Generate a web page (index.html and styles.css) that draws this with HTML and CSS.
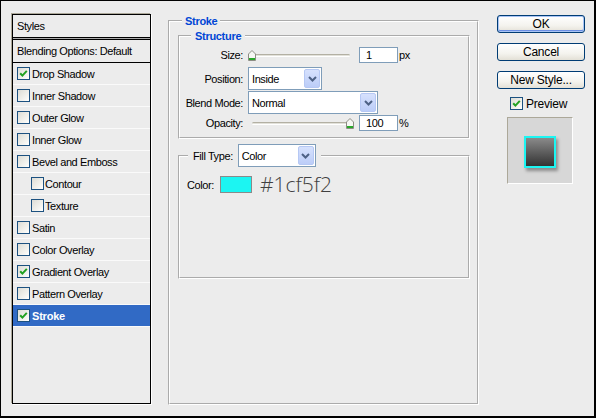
FILE: index.html
```html
<!DOCTYPE html>
<html>
<head>
<meta charset="utf-8">
<title>Layer Style</title>
<link rel="stylesheet" href="styles.css">
</head>
<body>
<div class="dialog">
  <div class="styles-panel">
    <div class="styles-head">Styles</div>
    <div class="blend-row">Blending Options: Default</div>
    <div class="style-row"><span class="cb"><svg viewBox="0 0 11 11" width="11" height="11"><path d="M2.2 5.2 L4.4 7.6 L8.8 2.9" /></svg></span><span>Drop Shadow</span></div>
    <div class="style-row"><span class="cb"></span><span>Inner Shadow</span></div>
    <div class="style-row"><span class="cb"></span><span>Outer Glow</span></div>
    <div class="style-row"><span class="cb"></span><span>Inner Glow</span></div>
    <div class="style-row"><span class="cb"></span><span>Bevel and Emboss</span></div>
    <div class="style-row sub"><span class="cb"></span><span>Contour</span></div>
    <div class="style-row sub"><span class="cb"></span><span>Texture</span></div>
    <div class="style-row"><span class="cb"></span><span>Satin</span></div>
    <div class="style-row"><span class="cb"></span><span>Color Overlay</span></div>
    <div class="style-row"><span class="cb"><svg viewBox="0 0 11 11" width="11" height="11"><path d="M2.2 5.2 L4.4 7.6 L8.8 2.9" /></svg></span><span>Gradient Overlay</span></div>
    <div class="style-row"><span class="cb"></span><span>Pattern Overlay</span></div>
    <div class="style-row selected"><span class="cb"><svg viewBox="0 0 11 11" width="11" height="11"><path d="M2.2 5.2 L4.4 7.6 L8.8 2.9" /></svg></span><span>Stroke</span></div>
  </div>

  <fieldset class="group stroke-group">
    <legend class="legend-blue stroke-legend">Stroke</legend>
    <fieldset class="group structure">
      <legend class="legend-blue structure-legend">Structure</legend>
      <div class="frow r-size">
        <span class="lbl">Size:</span>
        <div class="slider">
          <div class="track"></div>
          <svg class="thumb" style="left:0px" width="8" height="11" viewBox="0 0 8 11"><path d="M0.5 4 L4 0.5 L7.5 4 V10.5 H0.5 Z" fill="#f7f7f4" stroke="#8d8d84"/><rect x="1" y="8" width="6" height="2" fill="#2aa82a"/></svg>
        </div>
        <div class="num">1</div><span class="unit">px</span>
      </div>
      <div class="frow r-sel">
        <span class="lbl">Position:</span>
        <div class="select sel-pos">Inside<span class="drop"><svg width="9" height="6" viewBox="0 0 9 6"><path d="M1 1 L4.5 4.5 L8 1"/></svg></span></div>
      </div>
      <div class="frow r-sel">
        <span class="lbl">Blend Mode:</span>
        <div class="select sel-blend">Normal<span class="drop"><svg width="9" height="6" viewBox="0 0 9 6"><path d="M1 1 L4.5 4.5 L8 1"/></svg></span></div>
      </div>
      <div class="frow r-op">
        <span class="lbl">Opacity:</span>
        <div class="slider">
          <div class="track"></div>
          <svg class="thumb" style="left:98px" width="8" height="11" viewBox="0 0 8 11"><path d="M0.5 4 L4 0.5 L7.5 4 V10.5 H0.5 Z" fill="#f7f7f4" stroke="#8d8d84"/><rect x="1" y="8" width="6" height="2" fill="#2aa82a"/></svg>
        </div>
        <div class="num">100</div><span class="unit">%</span>
      </div>
    </fieldset>
    <fieldset class="group fill">
      <legend class="fill-legend"><span>Fill Type:</span><div class="select sel-fill">Color<span class="drop"><svg width="9" height="6" viewBox="0 0 9 6"><path d="M1 1 L4.5 4.5 L8 1"/></svg></span></div></legend>
      <div class="color-row">
        <span>Color:</span>
        <span class="swatch"></span>
        <span class="hex">#1cf5f2</span>
      </div>
    </fieldset>
  </fieldset>

  <div class="actions">
    <div class="btn default">OK</div>
    <div class="btn">Cancel</div>
    <div class="btn">New Style...</div>
    <div class="preview-check"><span class="cb"><svg viewBox="0 0 11 11" width="11" height="11"><path d="M2.2 5.2 L4.4 7.6 L8.8 2.9" /></svg></span><span>Preview</span></div>
    <div class="preview-box"><div class="preview-square"></div></div>
  </div>
</div>
</body>
</html>
```

FILE: styles.css
```css
* { box-sizing: border-box; }
html, body { margin: 0; padding: 0; }
body {
  font-family: "Liberation Sans", Arial, sans-serif;
  font-size: 11px;
  letter-spacing: -0.4px;
  color: #000;
  background: #ececec;
}
.dialog {
  width: 596px;
  height: 418px;
  background: #ececec;
  border-style: solid;
  border-color: #000;
  border-width: 1px 2px 2px 1px;
  display: flex;
  align-items: flex-start;
  padding: 13px 0 0 11px;
}

/* left list */
.styles-panel {
  flex: none;
  width: 139px;
  height: 390px;
  border: 1px solid #000;
  box-shadow: -1px -1px 0 #aca899, 1px 1px 0 #fff;
}
.styles-head {
  height: 23px;
  line-height: 22px;
  padding-left: 4px;
  border-bottom: 1px solid #000;
  box-shadow: 0 1px 0 #a9a9a9;
}
.blend-row {
  margin-top: 1px;
  height: 24px;
  line-height: 22px;
  padding-left: 4px;
  border-top: 1px solid #000;
  border-bottom: 1px solid #000;
}
.style-row {
  height: 22px;
  display: flex;
  align-items: center;
  gap: 2px;
  padding-left: 4px;
  border-bottom: 1px solid #fafafa;
}
.style-row.sub { padding-left: 18px; gap: 1px; }
.style-row.selected {
  background: #316ac5;
  color: #fff;
  font-weight: bold;
  letter-spacing: -0.2px;
}
.cb {
  flex: none;
  width: 13px;
  height: 13px;
  border: 1px solid #1c5180;
  background: linear-gradient(135deg, #dcdcd5 0%, #f4f4f0 70%, #fff 100%);
  display: block;
}
.cb svg { display: block; }
.cb path { fill: none; stroke: #21a121; stroke-width: 2; }

/* group boxes */
.group {
  margin: 0;
  padding: 0;
  border: 2px groove #fff;
  min-width: 0;
}
.legend-blue {
  color: #0046d5;
  font-weight: bold;
  letter-spacing: -0.3px;
  line-height: 14px;
}
.stroke-group {
  flex: none;
  width: 311px;
  height: 391px;
  margin-left: 17px;
  padding-top: 1px;
}
.stroke-legend { margin-left: 12px; padding: 0 3px; }
.structure {
  height: 110px;
  margin: 0 7px 0 8px;
  padding-top: 4px;
}
.structure-legend { margin-left: 11px; padding: 0 4px; }

.frow { display: flex; align-items: center; }
.frow .lbl {
  width: 63px;
  margin-right: 5px;
  text-align: right;
  flex: none;
}
.r-size { height: 16px; margin-bottom: 4px; }
.r-sel { height: 23px; margin-bottom: 1px; }
.r-op { height: 16px; }

.slider {
  position: relative;
  width: 106px;
  height: 11px;
  padding: 0 4px;
  margin-right: 5px;
  display: flex;
  align-items: center;
  flex: none;
}
.track {
  width: 98px;
  height: 3px;
  border-top: 1px solid #b3b0a3;
  border-bottom: 1px solid #fff;
  background: #e2e1da;
  border-radius: 2px;
}
.thumb { position: absolute; top: 0; display: block; }
.num {
  flex: none;
  width: 39px;
  height: 16px;
  line-height: 14px;
  padding-left: 6px;
  border: 1px solid #7f9db9;
  background: #fff;
}
.unit { margin-left: 1px; }

.select {
  flex: none;
  height: 23px;
  display: flex;
  align-items: center;
  padding-left: 3px;
  border: 1px solid #7f9db9;
  background: #fff;
}
.sel-pos { width: 74px; }
.sel-blend { width: 130px; }
.sel-fill { width: 78px; }
.drop {
  margin-left: auto;
  margin-right: 1px;
  width: 16px;
  height: 19px;
  border: 1px solid #b6c8f4;
  border-radius: 2px;
  background: linear-gradient(#d6e1fd, #bccdf8);
  display: flex;
  align-items: center;
  justify-content: center;
}
.drop svg { display: block; }
.drop path { fill: none; stroke: #4d6185; stroke-width: 2; }

.fill {
  height: 135px;
  margin: 5px 7px 0 8px;
  padding-top: 9px;
}
.fill-legend {
  display: flex;
  align-items: center;
  gap: 5px;
  margin-left: 8px;
  padding: 0 5px;
}
.color-row {
  display: flex;
  align-items: center;
  height: 17px;
  padding-left: 7px;
}
.swatch {
  width: 32px;
  height: 17px;
  margin-left: 6px;
  border: 1px solid #8a8a8a;
  background: #1cf5f2;
}
.hex {
  margin-left: 8px;
  font-family: "Open Sans", "Liberation Sans", sans-serif;
  font-weight: 300;
  font-size: 21px;
  line-height: 21px;
  letter-spacing: 0;
  color: #404040;
}

/* right column */
.actions {
  flex: none;
  width: 88px;
  margin-left: 18px;
  margin-top: 1px;
  display: flex;
  flex-direction: column;
}
.btn {
  height: 18px;
  margin-bottom: 10px;
  border: 1px solid #003c74;
  border-radius: 3px;
  background: linear-gradient(#ffffff 0%, #f4f3ee 60%, #e3e0d6 100%);
  text-align: center;
  line-height: 16px;
  font-size: 12px;
  letter-spacing: -0.2px;
}
.btn.default {
  box-shadow: inset 0 0 0 1px #a9c4f5, inset 0 -1px 0 1px #6c8fe4;
}
.preview-check {
  display: flex;
  align-items: center;
  gap: 3px;
  margin-top: -2px;
  padding-left: 13px;
  height: 13px;
  font-size: 12px;
  letter-spacing: -0.2px;
}
.preview-box {
  margin-top: 7px;
  margin-left: 10px;
  width: 66px;
  height: 67px;
  background: #d7d7d7;
  border-style: solid;
  border-width: 1px;
  border-color: #aca899 #fff #fff #aca899;
  display: flex;
  justify-content: center;
  align-items: center;
  padding-top: 2px;
}
.preview-square {
  width: 32px;
  height: 32px;
  border: 2px solid #1cf5f2;
  background: linear-gradient(#8a8a8a, #333);
  box-shadow: 2px 3px 3px rgba(0, 0, 0, 0.35);
}
```
